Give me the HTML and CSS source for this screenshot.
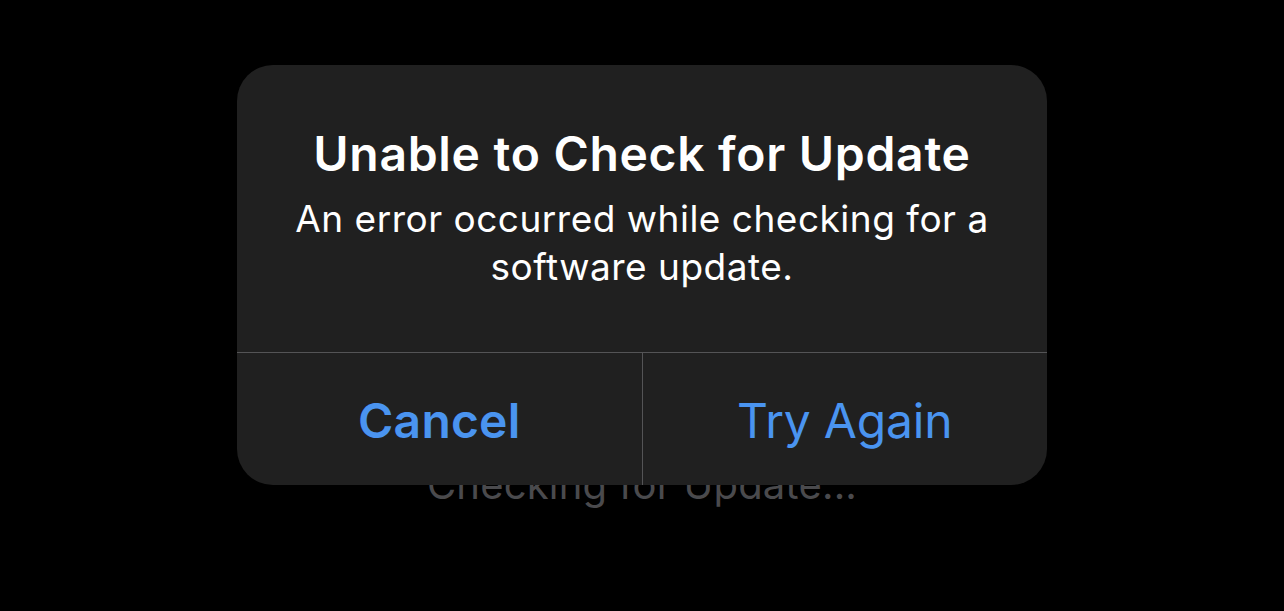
FILE: index.html
```html
<!DOCTYPE html>
<html>
<head>
<meta charset="utf-8">
<link rel="stylesheet" href="styles.css">
</head>
<body>
<div class="screen">
  <div class="status">Checking for Update...</div>
  <div class="alert">
    <div class="alert-body">
      <div class="alert-title">Unable to Check for Update</div>
      <div class="alert-message">An error occurred while checking for a<br>software update.</div>
    </div>
    <div class="alert-actions">
      <div class="action action-cancel">Cancel</div>
      <div class="action action-retry">Try Again</div>
    </div>
  </div>
</div>
</body>
</html>
```
FILE: styles.css
```css
html, body {
  margin: 0;
  padding: 0;
  background: #000;
}
.screen {
  position: relative;
  width: 1284px;
  height: 611px;
  background: #000;
  font-family: Inter, "Noto Sans", sans-serif;
  display: flex;
  flex-direction: column;
  align-items: center;
}
.status {
  margin-top: 460px;
  font-size: 40px;
  line-height: 50px;
  color: #4a4a4d;
  letter-spacing: 0.2px;
}
.alert {
  position: absolute;
  left: 237px;
  top: 65px;
  width: 810px;
  height: 420px;
  background: #202020;
  border-radius: 36px;
  display: flex;
  flex-direction: column;
  overflow: hidden;
}
.alert-body {
  height: 288px;
  border-bottom: 1px solid #545456;
  display: flex;
  flex-direction: column;
  align-items: center;
  padding-top: 62px;
  box-sizing: border-box;
  color: #fff;
  text-align: center;
}
.alert-title {
  font-size: 48px;
  font-weight: 600;
  line-height: 54px;
  letter-spacing: 0.7px;
}
.alert-message {
  margin-top: 14px;
  font-size: 37px;
  line-height: 48px;
  font-weight: 400;
  letter-spacing: 0.5px;
}
.alert-actions {
  flex: 1;
  display: flex;
}
.action {
  flex: 1;
  display: flex;
  align-items: center;
  justify-content: center;
  color: #4a94f0;
  font-size: 48px;
  padding-top: 2px;
}
.action-cancel {
  font-weight: 600;
  letter-spacing: 0.2px;
  border-right: 1px solid #545456;
}
.action-retry {
  font-weight: 400;
  letter-spacing: -0.2px;
}
```
